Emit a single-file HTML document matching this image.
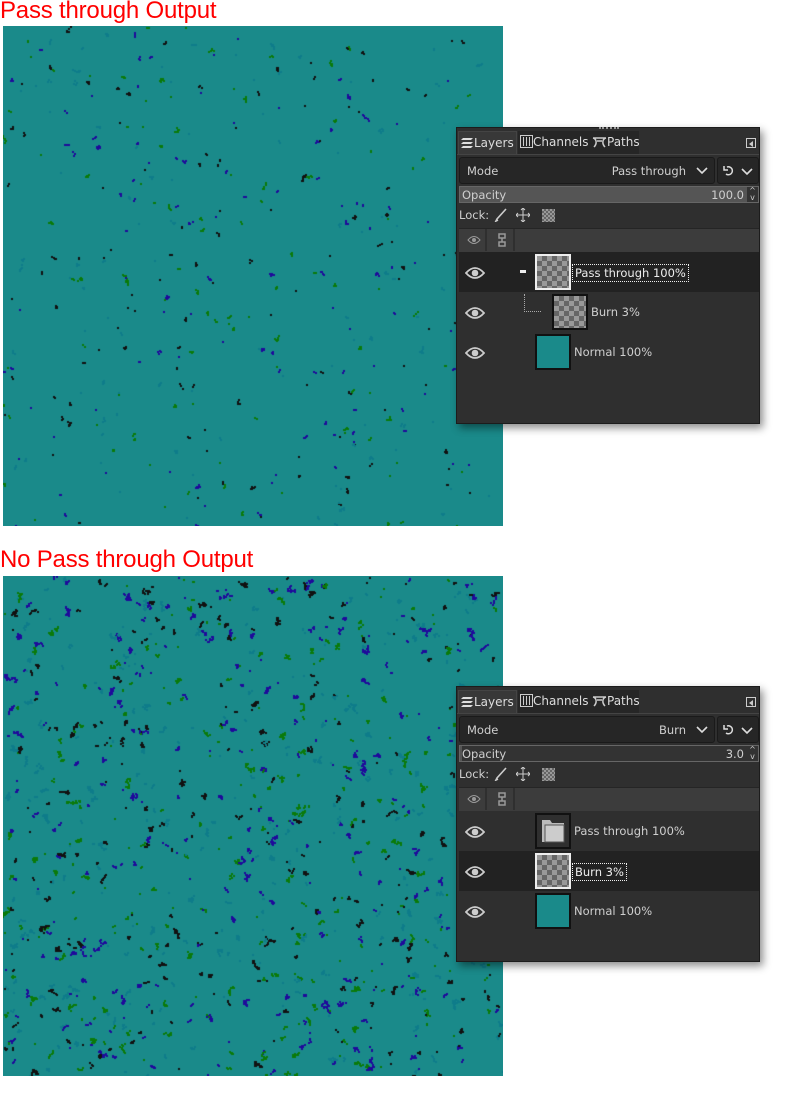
<!DOCTYPE html>
<html><head><meta charset="utf-8"><style>
*{margin:0;padding:0;box-sizing:border-box}
body{width:810px;height:1100px;background:#fff;position:relative;overflow:hidden;font-family:"DejaVu Sans","Liberation Sans",sans-serif}
.title{position:absolute;left:0;color:#f00;font-family:"Liberation Sans",sans-serif;font-size:24px;line-height:26px;white-space:nowrap;letter-spacing:-0.2px}
canvas{position:absolute;left:3px;width:500px;height:500px}
.panel{position:absolute;left:456px;width:304px;background:#2f2f2f;border:1px solid #1c1c1c;box-shadow:3px 4px 8px rgba(0,0,0,.45);color:#cfcfcf;font-size:11.5px}
.a{position:absolute}
.tab{position:absolute;top:3px;height:23px;line-height:23px;color:#ddd;font-size:12px;padding-left:2px;white-space:nowrap}
.box{position:absolute;background:#262626;border:1px solid #1a1a1a;border-radius:3px}
.chk{background-color:#999;background-image:linear-gradient(45deg,#666 25%,transparent 25%,transparent 75%,#666 75%),linear-gradient(45deg,#666 25%,transparent 25%,transparent 75%,#666 75%);background-size:10px 10px;background-position:0 0,5px 5px}
.thumb{position:absolute;width:36px;height:36px;border:2px solid #111}
.lbl{position:absolute;line-height:16px;white-space:nowrap;color:#cfcfcf}
.sel{border:1px dotted #eee;padding:0 2px;color:#eee}
.eye{position:absolute;left:8px;width:20px;height:14px}
</style></head><body>
<div class="title" style="top:-2px">Pass through Output</div>
<div class="title" style="top:547px">No Pass through Output</div>
<canvas id="c1" width="500" height="500" style="top:26px"></canvas>
<canvas id="c2" width="500" height="500" style="top:576px"></canvas>

<!-- PANEL 1 -->
<div class="panel" style="top:127px;height:297px">
 <div class="a" style="left:142px;top:-1px;width:20px;height:3px;border-top:2px dotted #999"></div>
 <div class="tab" style="left:1px;width:59px;background:#383838;border:1px solid #444;border-bottom:none">
  <svg width="13" height="13" style="vertical-align:-2px" viewBox="0 0 13 13"><path d="M2 2h10L10 4H0zM2 6h10L10 8H0zM2 10h10l-2 2H0z" fill="#ddd"/></svg>Layers</div>
 <div class="tab" style="left:61px;width:72px;background:#262626"><svg width="13" height="13" style="vertical-align:-2px"><rect x=".5" y=".5" width="12" height="12" fill="none" stroke="#ccc"/><path d="M3.5 2v9M6.5 2v9M9.5 2v9" stroke="#ccc"/></svg>Channels</div>
 <div class="tab" style="left:133px;width:49px;background:#262626"><svg width="15" height="12" style="vertical-align:-2px"><path d="M1 2h13M1 2c4 1 4 6 1 9M14 2c-4 1-4 6-1 9M5 5h5" stroke="#ccc" stroke-width="1.5" fill="none"/></svg>Paths</div>
 <div class="a" style="left:289px;top:10px;width:10px;height:10px;border:1px solid #ccc"><div style="margin:2px 0 0 2px;width:0;height:0;border-top:3px solid transparent;border-bottom:3px solid transparent;border-right:4px solid #ccc"></div></div>
 <div class="a" style="left:0;top:26px;width:302px;border-top:1px solid #444"></div>
 <div class="box" style="left:2px;top:29px;width:256px;height:27px"><span class="lbl" style="left:7px;top:5px">Mode</span><span class="lbl" style="right:28px;top:5px">Pass through</span><svg class="a" style="right:6px;top:9px" width="12" height="8"><path d="M1 1l5 5 5-5" stroke="#ddd" stroke-width="1.6" fill="none"/></svg></div>
 <div class="box" style="left:260px;top:29px;width:42px;height:27px"><svg class="a" style="left:4px;top:6px" width="34" height="14"><path d="M5 3a4 4 0 1 1-1 7M2 2v4h4" stroke="#ddd" stroke-width="1.5" fill="none"/><path d="M20 5l5 5 5-5" stroke="#ddd" stroke-width="1.6" fill="none"/></svg></div>
 <div class="a" style="left:2px;top:58px;width:300px;height:17px;background:#555;border:1px solid #666"><span class="lbl" style="left:2px;top:0">Opacity</span><span class="lbl" style="right:14px;top:0">100.0</span><div class="a" style="right:0;top:0;width:11px;height:15px;background:#333;color:#ccc;font-size:8px;line-height:7px;text-align:center">^<br>v</div></div>
 <span class="lbl" style="left:2px;top:79px">Lock:</span>
 <svg class="a" style="left:37px;top:80px" width="14" height="14"><path d="M12 1L3 11l-1 2 2-1" stroke="#ccc" stroke-width="1.6" fill="none"/></svg>
 <svg class="a" style="left:59px;top:80px" width="14" height="14"><path d="M7 0v14M0 7h14M5 2l2-2 2 2M5 12l2 2 2-2M2 5L0 7l2 2M12 5l2 2-2 2" stroke="#ccc" fill="none"/></svg>
 <div class="a chk" style="left:85px;top:81px;width:13px;height:13px;background-size:4px 4px;background-position:0 0,2px 2px"></div>
 <div class="a" style="left:2px;top:100px;width:300px;height:24px;background:#3c3c3c;border-top:1px solid #252525"></div>
 <div class="a" style="left:3px;top:101px;width:27px;height:22px;border-right:2px solid #2f2f2f"></div>
 <div class="a" style="left:31px;top:101px;width:27px;height:22px;border-right:2px solid #2f2f2f"></div>
 <svg class="a" style="left:10px;top:107px" width="14" height="10"><path d="M1 5q6-7 12 0q-6 7-12 0z" fill="none" stroke="#999"/><circle cx="7" cy="5" r="2" fill="#999"/></svg>
 <svg class="a" style="left:40px;top:105px" width="10" height="14"><path d="M2 1h6v4H2zM2 9h6v4H2zM5 5v4" stroke="#999" stroke-width="1.5" fill="none"/></svg>
 <div class="a" style="left:2px;top:124px;width:300px;height:40px;background:#222"></div>
 <svg class="eye" style="top:138px" viewBox="0 0 20 14"><path d="M1 7q9-10 18 0q-9 10-18 0z" fill="none" stroke="#ccc" stroke-width="1.8"/><circle cx="10" cy="7" r="3.3" fill="#ccc"/></svg>
 <div class="a" style="left:63px;top:142px;width:6px;height:3px;background:#eee"></div>
 <div class="thumb chk" style="left:78px;top:126px;border-color:#eee"></div>
 <span class="lbl sel" style="left:115px;top:136px">Pass through 100%</span>
 <svg class="eye" style="top:178px" viewBox="0 0 20 14"><path d="M1 7q9-10 18 0q-9 10-18 0z" fill="none" stroke="#ccc" stroke-width="1.8"/><circle cx="10" cy="7" r="3.3" fill="#ccc"/></svg>
 <div class="a" style="left:67px;top:166px;height:18px;width:17px;border-left:1px dotted #aaa;border-bottom:1px dotted #aaa"></div>
 <div class="thumb chk" style="left:95px;top:166px"></div>
 <span class="lbl" style="left:134px;top:176px">Burn 3%</span>
 <svg class="eye" style="top:218px" viewBox="0 0 20 14"><path d="M1 7q9-10 18 0q-9 10-18 0z" fill="none" stroke="#ccc" stroke-width="1.8"/><circle cx="10" cy="7" r="3.3" fill="#ccc"/></svg>
 <div class="thumb" style="left:78px;top:206px;background:#1a8a8a"></div>
 <span class="lbl" style="left:117px;top:216px">Normal 100%</span>
</div>

<!-- PANEL 2 -->
<div class="panel" style="top:686px;height:276px">
 <div class="tab" style="left:1px;width:59px;background:#383838;border:1px solid #444;border-bottom:none">
  <svg width="13" height="13" style="vertical-align:-2px" viewBox="0 0 13 13"><path d="M2 2h10L10 4H0zM2 6h10L10 8H0zM2 10h10l-2 2H0z" fill="#ddd"/></svg>Layers</div>
 <div class="tab" style="left:61px;width:72px;background:#262626"><svg width="13" height="13" style="vertical-align:-2px"><rect x=".5" y=".5" width="12" height="12" fill="none" stroke="#ccc"/><path d="M3.5 2v9M6.5 2v9M9.5 2v9" stroke="#ccc"/></svg>Channels</div>
 <div class="tab" style="left:133px;width:49px;background:#262626"><svg width="15" height="12" style="vertical-align:-2px"><path d="M1 2h13M1 2c4 1 4 6 1 9M14 2c-4 1-4 6-1 9M5 5h5" stroke="#ccc" stroke-width="1.5" fill="none"/></svg>Paths</div>
 <div class="a" style="left:289px;top:10px;width:10px;height:10px;border:1px solid #ccc"><div style="margin:2px 0 0 2px;width:0;height:0;border-top:3px solid transparent;border-bottom:3px solid transparent;border-right:4px solid #ccc"></div></div>
 <div class="a" style="left:0;top:26px;width:302px;border-top:1px solid #444"></div>
 <div class="box" style="left:2px;top:29px;width:256px;height:27px"><span class="lbl" style="left:7px;top:5px">Mode</span><span class="lbl" style="right:28px;top:5px">Burn</span><svg class="a" style="right:6px;top:9px" width="12" height="8"><path d="M1 1l5 5 5-5" stroke="#ddd" stroke-width="1.6" fill="none"/></svg></div>
 <div class="box" style="left:260px;top:29px;width:42px;height:27px"><svg class="a" style="left:4px;top:6px" width="34" height="14"><path d="M5 3a4 4 0 1 1-1 7M2 2v4h4" stroke="#ddd" stroke-width="1.5" fill="none"/><path d="M20 5l5 5 5-5" stroke="#ddd" stroke-width="1.6" fill="none"/></svg></div>
 <div class="a" style="left:2px;top:58px;width:300px;height:17px;background:#333;border:1px solid #666"><div class="a" style="left:0;top:0;width:2px;height:15px;background:#555"></div><span class="lbl" style="left:2px;top:0">Opacity</span><span class="lbl" style="right:14px;top:0">3.0</span><div class="a" style="right:0;top:0;width:11px;height:15px;background:#333;color:#ccc;font-size:8px;line-height:7px;text-align:center">^<br>v</div></div>
 <span class="lbl" style="left:2px;top:79px">Lock:</span>
 <svg class="a" style="left:37px;top:80px" width="14" height="14"><path d="M12 1L3 11l-1 2 2-1" stroke="#ccc" stroke-width="1.6" fill="none"/></svg>
 <svg class="a" style="left:59px;top:80px" width="14" height="14"><path d="M7 0v14M0 7h14M5 2l2-2 2 2M5 12l2 2 2-2M2 5L0 7l2 2M12 5l2 2-2 2" stroke="#ccc" fill="none"/></svg>
 <div class="a chk" style="left:85px;top:81px;width:13px;height:13px;background-size:4px 4px;background-position:0 0,2px 2px"></div>
 <div class="a" style="left:2px;top:100px;width:300px;height:24px;background:#3c3c3c;border-top:1px solid #252525"></div>
 <div class="a" style="left:3px;top:101px;width:27px;height:22px;border-right:2px solid #2f2f2f"></div>
 <div class="a" style="left:31px;top:101px;width:27px;height:22px;border-right:2px solid #2f2f2f"></div>
 <svg class="a" style="left:10px;top:107px" width="14" height="10"><path d="M1 5q6-7 12 0q-6 7-12 0z" fill="none" stroke="#999"/><circle cx="7" cy="5" r="2" fill="#999"/></svg>
 <svg class="a" style="left:40px;top:105px" width="10" height="14"><path d="M2 1h6v4H2zM2 9h6v4H2zM5 5v4" stroke="#999" stroke-width="1.5" fill="none"/></svg>
 <svg class="eye" style="top:138px" viewBox="0 0 20 14"><path d="M1 7q9-10 18 0q-9 10-18 0z" fill="none" stroke="#ccc" stroke-width="1.8"/><circle cx="10" cy="7" r="3.3" fill="#ccc"/></svg>
 <div class="thumb" style="left:78px;top:126px;background:#2f2f2f"><svg width="32" height="32"><path d="M5 5h8l2 3h12v19H5z" fill="#bbb"/><path d="M8 10h19v17H8z" fill="#ccc" stroke="#555" stroke-width="1"/></svg></div>
 <span class="lbl" style="left:117px;top:136px">Pass through 100%</span>
 <div class="a" style="left:2px;top:164px;width:300px;height:40px;background:#222"></div>
 <svg class="eye" style="top:178px" viewBox="0 0 20 14"><path d="M1 7q9-10 18 0q-9 10-18 0z" fill="none" stroke="#ccc" stroke-width="1.8"/><circle cx="10" cy="7" r="3.3" fill="#ccc"/></svg>
 <div class="thumb chk" style="left:78px;top:166px;border-color:#eee"></div>
 <span class="lbl sel" style="left:115px;top:176px">Burn 3%</span>
 <svg class="eye" style="top:218px" viewBox="0 0 20 14"><path d="M1 7q9-10 18 0q-9 10-18 0z" fill="none" stroke="#ccc" stroke-width="1.8"/><circle cx="10" cy="7" r="3.3" fill="#ccc"/></svg>
 <div class="thumb" style="left:78px;top:206px;background:#1a8a8a"></div>
 <span class="lbl" style="left:117px;top:216px">Normal 100%</span>
</div>

<script>
function rnd(s){return function(){s=(s*1103515245+12345)&0x7fffffff;return s/0x7fffffff;}}
function draw(id,n,seed,big){
 var c=document.getElementById(id),x=c.getContext('2d'),r=rnd(seed);
 x.fillStyle='#1a8a8a';x.fillRect(0,0,500,500);
 var cols=['#1e0a9a','#0a7a0a','#111111','#0e7c8a'];
 for(var i=0;i<n;i++){
  var px=r()*500,py=r()*500,col=cols[Math.floor(r()*4)];x.fillStyle=col;
  var k=1+Math.floor(r()*r()*big);
  for(var j=0;j<k;j++){x.fillRect(Math.round(px),Math.round(py),2,2);px+=(r()-.5)*4;py+=(r()-.5)*4;}
 }
}
draw('c1',450,7,8);draw('c2',5500,13,20);
</script>
</body></html>
